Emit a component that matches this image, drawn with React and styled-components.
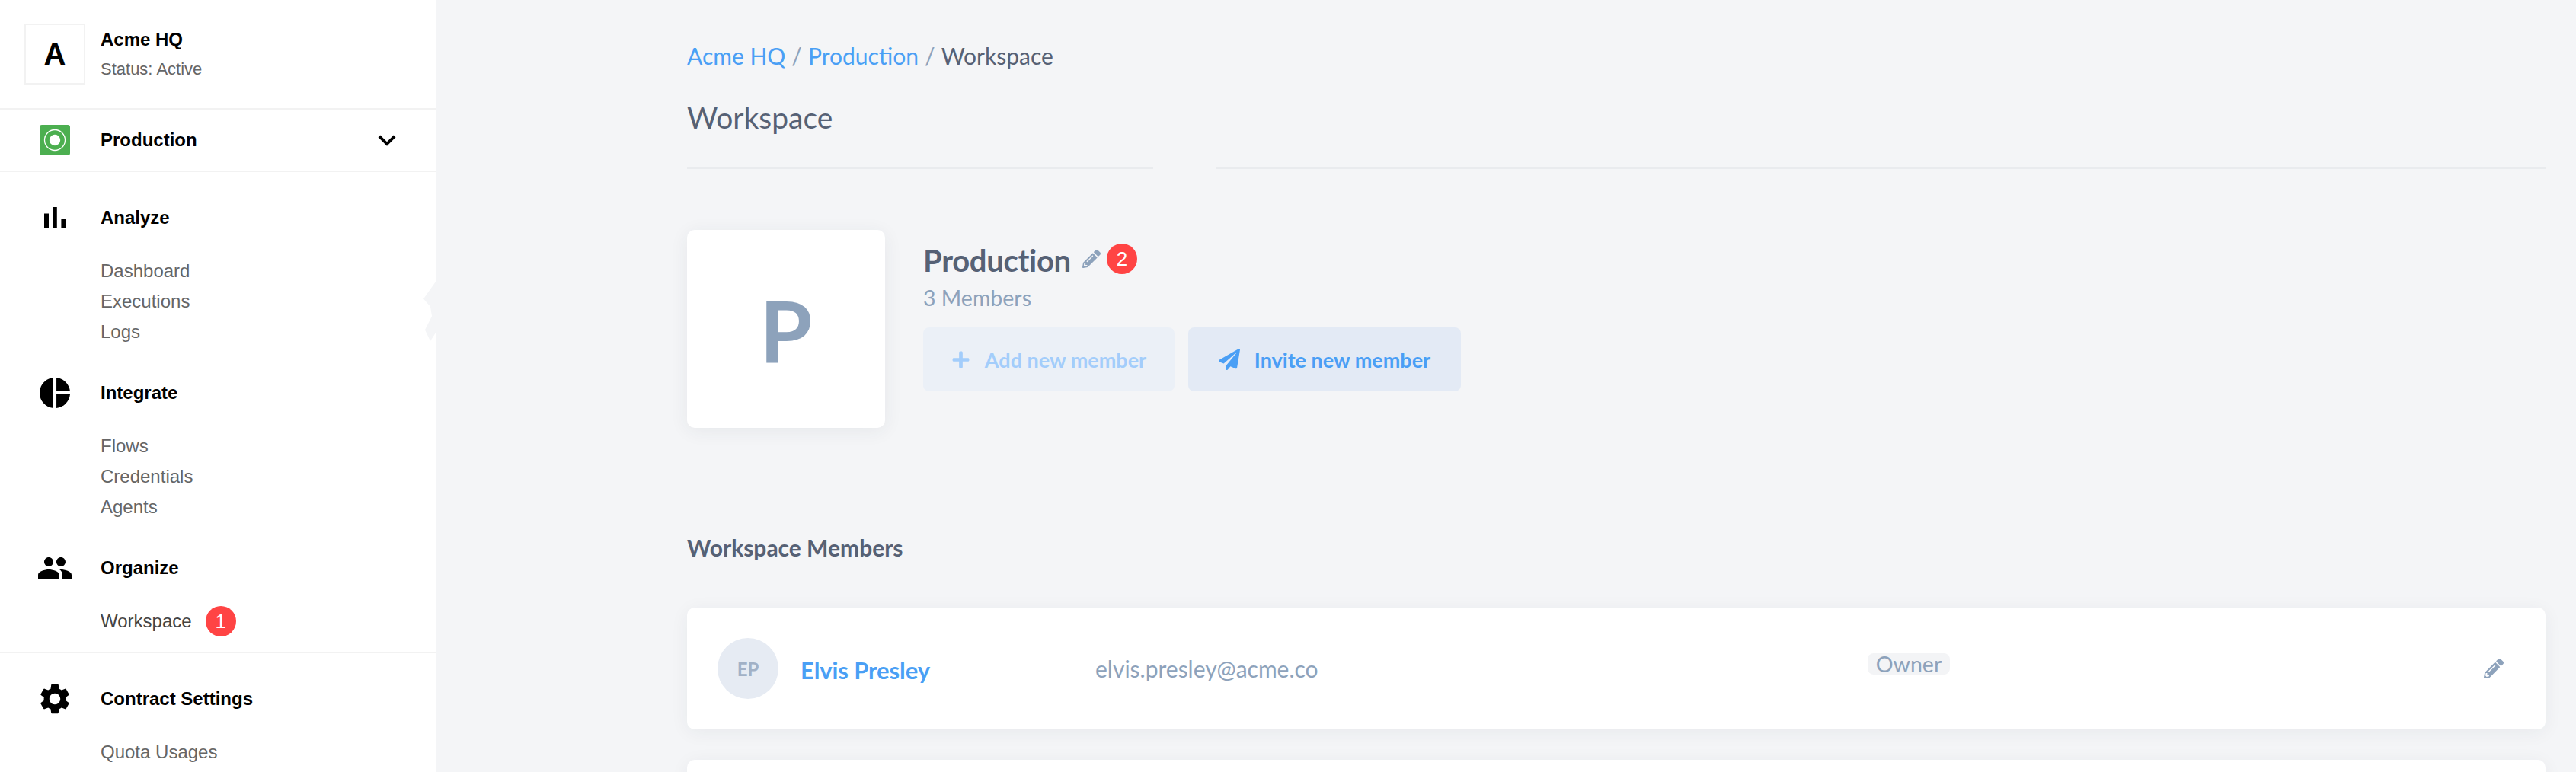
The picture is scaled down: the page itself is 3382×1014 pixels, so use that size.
import React from "react";
import styled, { createGlobalStyle } from "styled-components";
import { MdPieChart, MdPeople, MdSettings, MdExpandMore } from "react-icons/md";
import { FaPencilAlt, FaPlus, FaPaperPlane } from "react-icons/fa";

const UI = '"Lato", "Noto Sans", sans-serif';
const SIDE = '"Liberation Sans", Arial, sans-serif';
const BLUE = "#4a9ff5";
const SLATE = "#566175";
const MUTED = "#8da2bb";

const Global = createGlobalStyle`
  html, body { margin: 0; padding: 0; height: 1014px; overflow: hidden; background: #f4f5f7; }
  * { box-sizing: border-box; }
`;

const Page = styled.div`
  display: flex;
  width: 3382px;
  height: 1014px;
  overflow: hidden;
  background: #f4f5f7;
  position: relative;
`;

const Sidebar = styled.aside`
  flex: 0 0 572px;
  height: 1014px;
  background: #fff;
  font-family: ${SIDE};
  color: #000;
  position: relative;
  overflow: hidden;
`;

const Notch = styled.div`
  position: absolute;
  left: 556px;
  top: 370px;
  width: 16px;
  height: 78px;
  background: #f4f5f7;
  clip-path: polygon(100% 0, 0 29%, 56% 42%, 69% 58%, 12% 81%, 56% 100%, 100% 86%);
`;

const OrgHeader = styled.div`
  display: flex;
  align-items: center;
  gap: 20px;
  height: 144px;
  padding: 0 32px;
  border-bottom: 2px solid #f2f2f2;
`;

const OrgAvatar = styled.div`
  width: 80px;
  height: 80px;
  border: 2px solid #f2f2f2;
  display: flex;
  align-items: center;
  justify-content: center;
  font-size: 40px;
  font-weight: 700;
`;

const OrgText = styled.div`
  display: flex;
  flex-direction: column;
  gap: 13px;
`;

const OrgName = styled.div`
  font-size: 24px;
  font-weight: 700;
  line-height: 26px;
`;

const OrgStatus = styled.div`
  font-size: 22px;
  line-height: 26px;
  color: #666;
`;

const EnvRow = styled.div`
  display: flex;
  align-items: center;
  height: 82px;
  padding: 0 41px 0 52px;
  border-bottom: 2px solid #f2f2f2;
  font-size: 24px;
  font-weight: 700;
`;

const EnvLabel = styled.span`
  margin-left: 40px;
  flex: 1;
`;

const Section = styled.section`
  padding: ${(p) => (p.$top ? "36px" : "0")} 0 0 48px;
`;

const SectionHead = styled.div`
  display: flex;
  align-items: center;
  gap: 36px;
  height: 48px;
  font-size: 24px;
  font-weight: 700;
`;

const SectionIcon = styled.span`
  display: flex;
  width: 48px;
  height: 48px;
  font-size: 48px;
`;

const SubList = styled.ul`
  list-style: none;
  margin: 26px 0 36px;
  padding: 0 0 0 84px;
`;

const SubItem = styled.li`
  display: flex;
  align-items: center;
  gap: 18px;
  height: 40px;
  font-size: 24px;
  color: ${(p) => (p.$active ? "#444" : "#666")};
`;

const Badge = styled.span`
  display: inline-flex;
  align-items: center;
  justify-content: center;
  flex: none;
  width: 40px;
  height: 40px;
  border-radius: 50%;
  background: #ff4444;
  color: #fff;
  font-family: ${SIDE};
  font-size: 26px;
  font-weight: 400;
`;

const SideDivider = styled.hr`
  margin: -16px 0 0;
  border: 0;
  height: 2px;
  background: #f2f2f2;
`;

const Main = styled.main`
  flex: 1;
  min-width: 0;
  padding: 0 40px 0 330px;
  font-family: ${UI};
  color: ${SLATE};
`;

const Breadcrumb = styled.nav`
  display: flex;
  gap: 8px;
  margin-top: 52px;
  font-size: 30px;
  line-height: 42px;
`;

const Crumb = styled.span`
  color: ${(p) => p.$color};
`;

const Title = styled.h1`
  margin: 35px 0 0;
  font-size: 39px;
  font-weight: 400;
  line-height: 50px;
`;

const TitleRule = styled.div`
  display: flex;
  gap: 82px;
  margin-top: 41px;
`;

const RuleSeg = styled.div`
  height: 2px;
  background: #e9ebee;
  flex: ${(p) => (p.$fixed ? "0 0 612px" : "1")};
`;

const Hero = styled.div`
  display: flex;
  gap: 50px;
  margin-top: 80px;
`;

const HeroTile = styled.div`
  width: 260px;
  height: 260px;
  display: flex;
  align-items: center;
  justify-content: center;
  background: #fff;
  border-radius: 10px;
  box-shadow: 0 4px 24px rgba(40, 50, 70, 0.07);
  color: ${MUTED};
  font-size: 112px;
  font-weight: 700;
`;

const HeroBody = styled.div`
  display: flex;
  flex-direction: column;
  padding-top: 18px;
`;

const NameRow = styled.div`
  display: flex;
  align-items: center;
  height: 40px;
`;

const HeroName = styled.h2`
  margin: 4px 0 0;
  font-size: 40px;
  font-weight: 700;
  line-height: 40px;
  letter-spacing: -0.3px;
`;

const EditIcon = styled.span`
  display: inline-flex;
  color: ${MUTED};
  font-size: ${(p) => p.$size}px;
  margin-left: ${(p) => p.$left || 0}px;
  margin-right: ${(p) => p.$right || 0}px;
`;

const MemberCount = styled.div`
  margin-top: 13px;
  font-size: 28.5px;
  line-height: 36px;
  color: ${MUTED};
`;

const Actions = styled.div`
  display: flex;
  gap: 18px;
  margin-top: 21px;
`;

const ActionButton = styled.button`
  display: flex;
  align-items: center;
  justify-content: center;
  gap: 19px;
  width: ${(p) => p.$w}px;
  height: 84px;
  border: 0;
  border-radius: 8px;
  background: ${(p) => (p.$off ? "#ebf0f7" : "#e3eaf5")};
  color: ${(p) => (p.$off ? "#a3cdfb" : BLUE)};
  font-family: ${UI};
  font-size: 27px;
  font-weight: 700;
  padding: 0;
`;

const MembersHeading = styled.h3`
  margin: 137px 0 0;
  font-size: 30px;
  font-weight: 700;
  line-height: 40px;
`;

const MemberCard = styled.div`
  display: grid;
  grid-template-columns: 109px 387px 1014px 1fr auto;
  align-items: center;
  height: 160px;
  margin-top: ${(p) => p.$mt}px;
  padding: 0 55px 0 40px;
  background: #fff;
  border-radius: 10px;
  box-shadow: 0 4px 24px rgba(40, 50, 70, 0.06);
`;

const Initials = styled.div`
  width: 80px;
  height: 80px;
  border-radius: 50%;
  display: flex;
  align-items: center;
  justify-content: center;
  background: #e6ebf3;
  color: #a2b1c6;
  font-size: 24px;
  font-weight: 700;
`;

const MemberName = styled.div`
  color: ${BLUE};
  font-size: 31px;
  font-weight: 700;
  padding-top: 4px;
  letter-spacing: -0.1px;
`;

const MemberEmail = styled.div`
  color: ${MUTED};
  font-size: 30px;
`;

const RoleCell = styled.div`
  align-self: start;
  padding-top: 60px;
`;

const RoleChip = styled.span`
  display: flex;
  align-items: center;
  justify-content: center;
  width: 108px;
  height: 28px;
  border-radius: 8px;
  background: #f3f4f6;
  color: ${MUTED};
  font-size: 28.5px;
`;

function EnvIcon() {
  return (
    <svg width="40" height="40" viewBox="0 0 40 40" aria-hidden="true">
      <rect width="40" height="40" rx="3" fill="#4caf50" />
      <circle cx="20" cy="20" r="13.5" fill="none" stroke="#fff" strokeWidth="1.3" />
      <circle cx="20" cy="20" r="7.2" fill="#fff" />
    </svg>
  );
}

function BarsIcon() {
  return (
    <svg width="48" height="48" viewBox="0 0 24 24" aria-hidden="true">
      <path d="M5 9.2h3V19H5zM10.6 5h2.8v14h-2.8zm5.6 8H19v6h-2.8z" fill="currentColor" />
    </svg>
  );
}

const groups = [
  { icon: <BarsIcon />, title: "Analyze", items: ["Dashboard", "Executions", "Logs"] },
  { icon: <MdPieChart />, title: "Integrate", items: ["Flows", "Credentials", "Agents"] },
  { icon: <MdPeople />, title: "Organize", items: ["Workspace"], badge: 1 },
];

export default function App() {
  return (
    <Page>
      <Global />
      <Sidebar>
        <OrgHeader>
          <OrgAvatar>A</OrgAvatar>
          <OrgText>
            <OrgName>Acme HQ</OrgName>
            <OrgStatus>Status: Active</OrgStatus>
          </OrgText>
        </OrgHeader>
        <EnvRow>
          <EnvIcon />
          <EnvLabel>Production</EnvLabel>
          <MdExpandMore size={46} />
        </EnvRow>
        {groups.map((g, i) => (
          <Section key={g.title} $top={i === 0}>
            <SectionHead>
              <SectionIcon>{g.icon}</SectionIcon>
              {g.title}
            </SectionHead>
            <SubList>
              {g.items.map((it) => (
                <SubItem key={it} $active={!!g.badge}>
                  {it}
                  {g.badge ? <Badge>{g.badge}</Badge> : null}
                </SubItem>
              ))}
            </SubList>
          </Section>
        ))}
        <SideDivider />
        <Section $top>
          <SectionHead>
            <SectionIcon><MdSettings /></SectionIcon>
            Contract Settings
          </SectionHead>
          <SubList>
            <SubItem>Quota Usages</SubItem>
          </SubList>
        </Section>
        <Notch />
      </Sidebar>
      <Main>
        <Breadcrumb>
          <Crumb $color={BLUE}>Acme HQ</Crumb>
          <Crumb $color={MUTED}>/</Crumb>
          <Crumb $color={BLUE}>Production</Crumb>
          <Crumb $color={MUTED}>/</Crumb>
          <Crumb $color={SLATE}>Workspace</Crumb>
        </Breadcrumb>
        <Title>Workspace</Title>
        <TitleRule>
          <RuleSeg $fixed />
          <RuleSeg />
        </TitleRule>
        <Hero>
          <HeroTile>P</HeroTile>
          <HeroBody>
            <NameRow>
              <HeroName>Production</HeroName>
              <EditIcon $size={24} $left={15} $right={8}><FaPencilAlt /></EditIcon>
              <Badge>2</Badge>
            </NameRow>
            <MemberCount>3 Members</MemberCount>
            <Actions>
              <ActionButton $off $w={330}><FaPlus size={25} />Add new member</ActionButton>
              <ActionButton $w={358}><FaPaperPlane size={28} />Invite new member</ActionButton>
            </Actions>
          </HeroBody>
        </Hero>
        <MembersHeading>Workspace Members</MembersHeading>
        <MemberCard $mt={59}>
          <Initials>EP</Initials>
          <MemberName>Elvis Presley</MemberName>
          <MemberEmail>elvis.presley@acme.co</MemberEmail>
          <RoleCell><RoleChip>Owner</RoleChip></RoleCell>
          <EditIcon $size={26}><FaPencilAlt /></EditIcon>
        </MemberCard>
        <MemberCard $mt={40} />
      </Main>
    </Page>
  );
}
